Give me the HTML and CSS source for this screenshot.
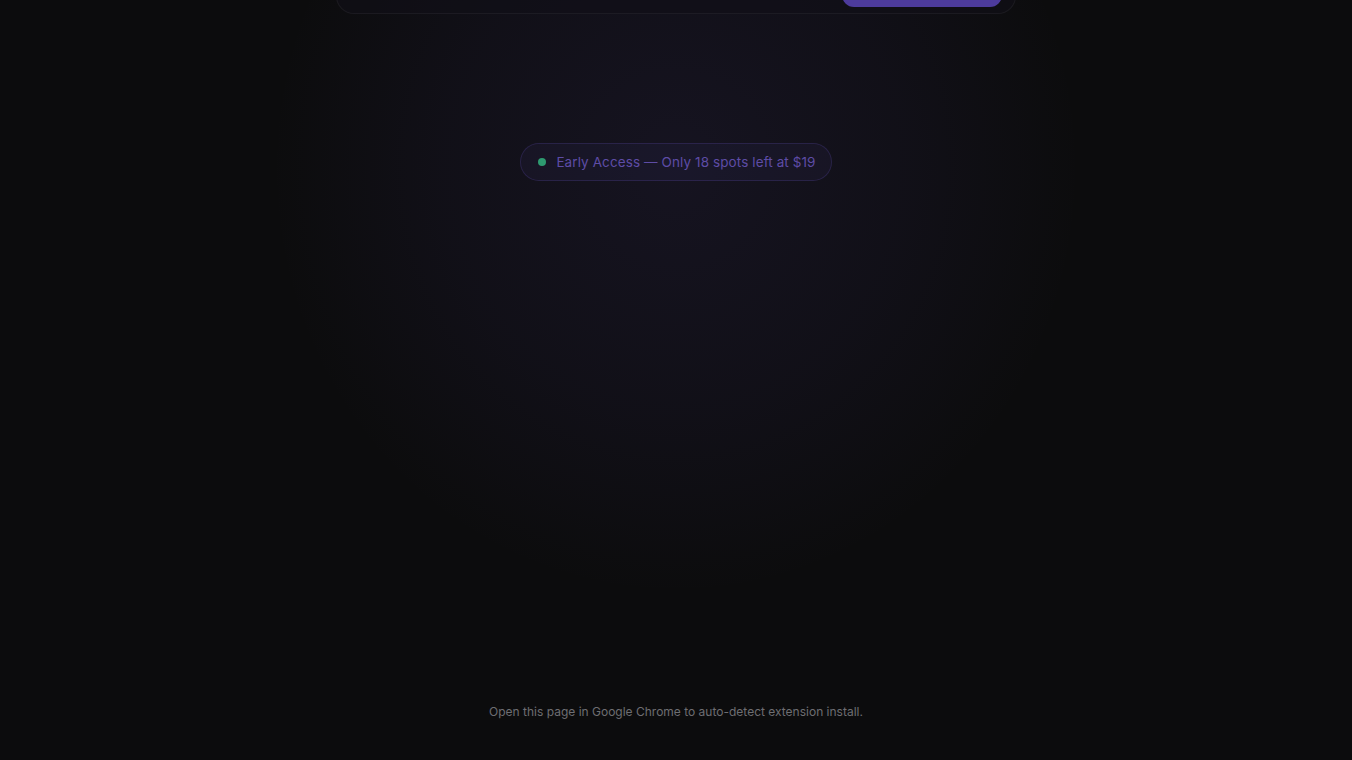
FILE: index.html
```html
<!DOCTYPE html>
<html lang="en">
<head>
<meta charset="utf-8">
<title>Early Access</title>
<link rel="stylesheet" href="styles.css">
</head>
<body>
<div class="glow"></div>
<div class="page">
  <header class="nav">
    <div class="nav-inner">
      <span class="nav-spacer"></span>
      <a class="nav-cta" href="#" aria-label="Get Early Access"></a>
    </div>
  </header>
  <main class="hero">
    <div class="badge"><span class="dot"></span><span class="badge-text">Early Access — Only 18 spots left at $19</span></div>
  </main>
  <footer class="foot">Open this page in Google Chrome to auto-detect extension install.</footer>
</div>
</body>
</html>
```
FILE: styles.css
```css
html, body {
  margin: 0;
  padding: 0;
  height: 100%;
}
body {
  background: #0c0c0d;
  font-family: Inter, "Noto Sans", sans-serif;
  overflow: hidden;
  position: relative;
}
.glow {
  position: absolute;
  left: 50%;
  top: -120px;
  width: 820px;
  height: 720px;
  transform: translateX(-50%);
  background: radial-gradient(ellipse at 50% 40%, rgba(120, 95, 230, 0.09) 0%, rgba(110, 85, 220, 0.05) 40%, rgba(100, 80, 200, 0) 70%);
  pointer-events: none;
}
.page {
  position: relative;
  display: flex;
  flex-direction: column;
  align-items: center;
  height: 760px;
}
.nav {
  width: 680px;
  height: 64px;
  margin-top: -50px;
  box-sizing: border-box;
  border: 1px solid rgba(255, 255, 255, 0.05);
  border-radius: 18px;
  background: rgba(16, 15, 24, 0.6);
}
.nav-inner {
  display: flex;
  justify-content: space-between;
  align-items: flex-start;
  padding: 0 13px 0 0;
  height: 100%;
}
.nav-cta {
  display: block;
  width: 160px;
  height: 56px;
  border-radius: 12px;
  background: #4d3b9c;
  text-decoration: none;
}
.hero {
  margin-top: 129px;
  display: flex;
  justify-content: center;
}
.badge {
  display: flex;
  align-items: center;
  gap: 10px;
  height: 38px;
  box-sizing: border-box;
  padding: 0 15px 0 17px;
  border: 1px solid rgba(120, 95, 230, 0.18);
  border-radius: 999px;
  background: rgba(120, 95, 230, 0.05);
}
.dot {
  width: 8px;
  height: 8px;
  border-radius: 50%;
  background: #2e9a70;
}
.badge-text {
  color: #5e4ca6;
  font-size: 13.5px;
  font-weight: 400;
  letter-spacing: 0.1px;
}
.foot {
  margin-top: auto;
  margin-bottom: 41px;
  color: #6e6e72;
  font-size: 12px;
}
```
